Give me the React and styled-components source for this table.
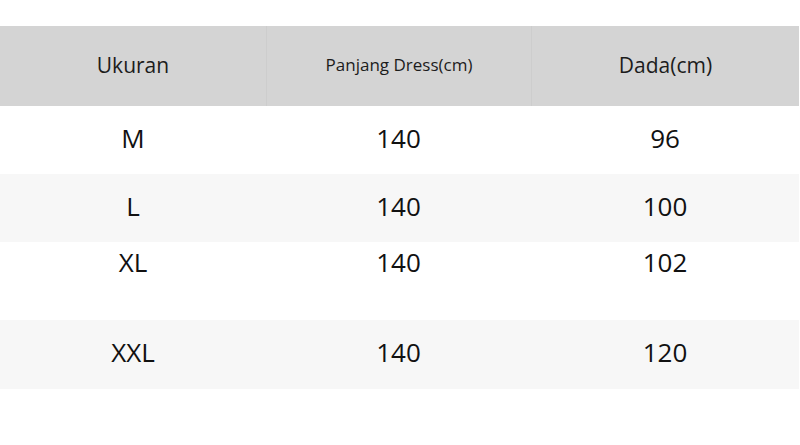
import React from 'react'
import styled, { createGlobalStyle } from 'styled-components'

const GlobalStyle = createGlobalStyle`
  html, body {
    margin: 0;
    padding: 0;
    background: #ffffff;
  }
  body {
    font-family: "Open Sans", "Noto Sans", "Liberation Sans", sans-serif;
    color: #111111;
  }
`

const Page = styled.div`
  width: 800px;
  height: 445px;
  padding-top: 26px;
  box-sizing: border-box;
  background: #ffffff;
`

const Table = styled.div`
  width: 799px;
  display: flex;
  flex-direction: column;
`

const Row = styled.div`
  display: grid;
  grid-template-columns: 266px 265px 1fr;
  height: ${p => p.height}px;
  background: ${p => p.bg};
  align-items: ${p => (p.top ? 'start' : 'center')};
`

const HeadCell = styled.div`
  height: 100%;
  display: flex;
  align-items: center;
  justify-content: center;
  padding-bottom: 3px;
  font-size: ${p => p.size || 21}px;
  color: #1c1c1c;
  border-left: ${p => (p.first ? 'none' : '1px solid #cdcdcd')};
  box-sizing: border-box;
`

const Cell = styled.div`
  text-align: center;
  font-size: 26px;
  line-height: 34px;
  padding-top: ${p => (p.top ? 3 : 0)}px;
  padding-bottom: ${p => (p.top ? 0 : 5)}px;
  color: #111111;
`

const rows = [
  { size: 'M', len: 140, chest: 96, height: 68, bg: '#ffffff' },
  { size: 'L', len: 140, chest: 100, height: 68, bg: '#f7f7f7' },
  { size: 'XL', len: 140, chest: 102, height: 78, bg: '#ffffff', top: true },
  { size: 'XXL', len: 140, chest: 120, height: 69, bg: '#f7f7f7' },
]

const App = () => {
  return (
    <Page>
      <GlobalStyle />
      <Table>
        <Row height={80} bg="#d4d4d4">
          <HeadCell first>Ukuran</HeadCell>
          <HeadCell size={17}>Panjang Dress(cm)</HeadCell>
          <HeadCell>Dada(cm)</HeadCell>
        </Row>
        {rows.map((r, index) => (
          <Row key={index} height={r.height} bg={r.bg} top={r.top}>
            <Cell top={r.top}>{r.size}</Cell>
            <Cell top={r.top}>{r.len}</Cell>
            <Cell top={r.top}>{r.chest}</Cell>
          </Row>
        ))}
      </Table>
    </Page>
  )
}

export default App
